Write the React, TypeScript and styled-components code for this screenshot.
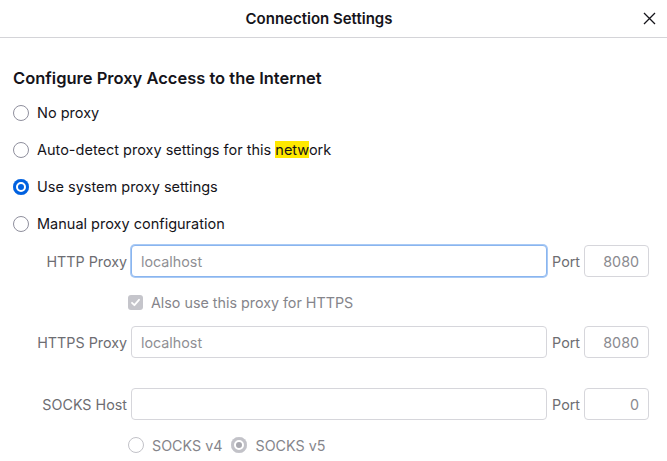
import React from "react";
import styled, {createGlobalStyle, css} from "styled-components";

const GlobalStyle = createGlobalStyle`
  html, body {
    margin: 0;
    padding: 0;
    background: #ffffff;
  }
  body {
    font-family: Inter, "Liberation Sans", Arial, sans-serif;
    color: #15141a;
  }
`;

const Dialog = styled.div`
  width: 667px;
  height: 461px;
  overflow: hidden;
  background: #ffffff;
`;

const Header = styled.div`
  height: 37px;
  display: flex;
  align-items: center;
  border-bottom: 1px solid #d4d4d8;
`;

const Title = styled.div`
  flex: 1;
  text-align: center;
  font-size: 15px;
  font-weight: 600;
`;

const CloseButton = styled.button`
  width: 29px;
  height: 37px;
  padding: 0 6px 0 0;
  border: none;
  background: transparent;
  display: flex;
  align-items: center;
  justify-content: center;
  color: #15141a;
`;

const Body = styled.div`
  padding: 0 18px 0 13px;
`;

const Heading = styled.h2`
  margin: 30px 0 6px;
  font-size: 16.5px;
  line-height: 20px;
  font-weight: 600;
`;

const RadioRow = styled.label`
  height: 37px;
  display: flex;
  align-items: center;
  gap: 8px;
  font-size: 14.5px;
`;

const Radio = styled.span<{$checked?: boolean; $disabled?: boolean}>`
  width: 16px;
  height: 16px;
  box-sizing: border-box;
  border-radius: 50%;
  border: 1.5px solid ${(p) => (p.$disabled ? "#c2c2c8" : "#8f8f9d")};
  background: #ffffff;
  flex-shrink: 0;
  ${(p) =>
    p.$checked &&
    css`
      border: none;
      background: ${p.$disabled ? "#a9a9b0" : "#0061e0"};
      box-shadow: inset 0 0 0 3px ${p.$disabled ? "#c2c2c8" : "#0061e0"},
        inset 0 0 0 5px #ffffff;
    `}
`;

const Highlight = styled.span`
  background: #ffe900;
`;

const ProxyRow = styled.div<{$top: number}>`
  margin-top: ${(p) => p.$top}px;
  height: 32px;
  display: grid;
  grid-template-columns: 114px 1fr auto 65px;
  column-gap: 4px;
  align-items: center;
`;

const FieldLabel = styled.span<{$pad?: number}>`
  font-size: 14.3px;
  color: #6d6d72;
  text-align: right;
  white-space: nowrap;
  padding-left: ${(p) => p.$pad || 0}px;
`;

const TextBox = styled.input<{$focused?: boolean; $alignRight?: boolean}>`
  height: 32px;
  box-sizing: border-box;
  width: 100%;
  border: 1px solid #d6d6db;
  border-radius: 4px;
  padding: 0 9px;
  font-family: inherit;
  font-size: 14.3px;
  color: #8a8a8f;
  background: #ffffff;
  text-align: ${(p) => (p.$alignRight ? "right" : "left")};
  outline: none;
  &::placeholder {
    color: #8f8f94;
  }
  ${(p) =>
    p.$focused &&
    css`
      border-color: #8ab5ef;
      box-shadow: 0 0 0 1px #a9caf5;
    `}
`;

const SubRow = styled.div<{$top: number}>`
  margin-top: ${(p) => p.$top}px;
  height: 20px;
  padding-left: 115px;
  display: flex;
  align-items: center;
  gap: 8px;
  font-size: 14.3px;
  color: #85858b;
`;

const Checkbox = styled.span`
  width: 15px;
  height: 15px;
  border-radius: 3px;
  background: #c5c5cb;
  display: flex;
  align-items: center;
  justify-content: center;
  flex-shrink: 0;
`;

const SubOption = styled.span`
  display: flex;
  align-items: center;
  gap: 8px;
  margin-right: 1px;
`;

interface FieldProps {
  label: string;
  host: string;
  port: string;
  top: number;
  focused?: boolean;
}

const Field = (props: FieldProps) => (
  <ProxyRow $top={props.top}>
    <FieldLabel>{props.label}</FieldLabel>
    <TextBox readOnly placeholder={props.host} $focused={props.focused} />
    <FieldLabel $pad={1}>Port</FieldLabel>
    <TextBox readOnly value={props.port} $alignRight />
  </ProxyRow>
);

const App = () => {
  return (
    <Dialog>
      <GlobalStyle />
      <Header>
        <Title>Connection Settings</Title>
        <CloseButton aria-label="Close">
          <svg width="13" height="13" viewBox="0 0 13 13">
            <path d="M1 1 L12 12 M12 1 L1 12" stroke="#15141a" strokeWidth="1.3" fill="none" />
          </svg>
        </CloseButton>
      </Header>
      <Body>
        <Heading>Configure Proxy Access to the Internet</Heading>
        <RadioRow>
          <Radio />
          No proxy
        </RadioRow>
        <RadioRow>
          <Radio />
          <span>
            Auto-detect proxy settings for this <Highlight>netw</Highlight>ork
          </span>
        </RadioRow>
        <RadioRow>
          <Radio $checked />
          Use system proxy settings
        </RadioRow>
        <RadioRow>
          <Radio />
          Manual proxy configuration
        </RadioRow>

        <Field label="HTTP Proxy" host="localhost" port="8080" top={3} focused />
        <SubRow $top={15}>
          <Checkbox>
            <svg width="11" height="11" viewBox="0 0 11 11">
              <path d="M2 5.8 L4.4 8.2 L9 2.8" stroke="#ffffff" strokeWidth="1.8" fill="none" strokeLinecap="round" strokeLinejoin="round" />
            </svg>
          </Checkbox>
          Also use this proxy for HTTPS
        </SubRow>
        <Field label="HTTPS Proxy" host="localhost" port="8080" top={14} />
        <Field label="SOCKS Host" host="" port="0" top={30} />
        <SubRow $top={15}>
          <SubOption>
            <Radio $disabled />
            SOCKS v4
          </SubOption>
          <SubOption>
            <Radio $checked $disabled />
            SOCKS v5
          </SubOption>
        </SubRow>
      </Body>
    </Dialog>
  );
};

export default App;
